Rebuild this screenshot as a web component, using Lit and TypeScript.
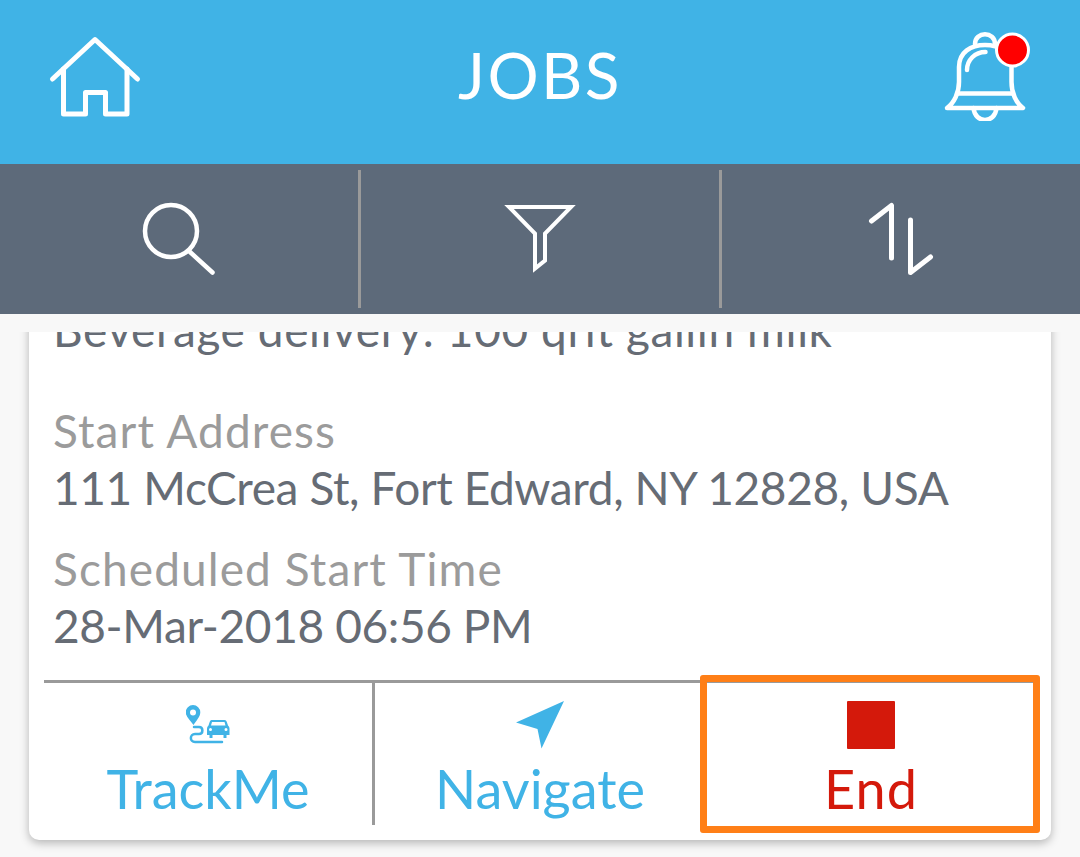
import { LitElement, html, css } from "lit";
import { customElement } from "lit/decorators.js";

@customElement("app-root")
export class AppRoot extends LitElement {
  static styles = css`
    :host { display: block; width: 1080px; height: 857px; background: #f8f8f8; overflow: hidden; font-family: Lato, "Liberation Sans", sans-serif; }
    .header { height: 164px; background: #40b3e6; display: grid; grid-template-columns: 1fr auto 1fr; align-items: center; color: #fff; }
    .title { font-size: 64px; font-weight: 400; letter-spacing: 2.4px; line-height: 164px; margin-top: -14px; }
    .hl { padding-left: 46px; display: flex; margin-top: -14px; }
    .hr { display: flex; justify-content: flex-end; padding-right: 46px; margin-top: -14px; }
    svg { display: block; }
    .toolbar { height: 150px; background: #5d6a7a; display: grid; grid-template-columns: repeat(3, 1fr); }
    .tool { display: flex; align-items: center; justify-content: center; position: relative; }
    .tool + .tool::before { content: ""; position: absolute; left: -2px; top: 6px; bottom: 6px; width: 3px; background: #9a9a9a; }
    .tool:nth-child(3)::before { left: -1px; }
    .list { height: 525px; margin-top: 18px; padding: 0 29px 17px; box-sizing: border-box; display: flex; flex-direction: column; justify-content: flex-end; overflow: hidden; }
    .card { flex: none; background: #fff; border-radius: 0 0 10px 10px; box-shadow: 0 3px 10px rgba(0, 0, 0, 0.28); }
    .fields { padding: 0 24px 26px; display: flex; flex-direction: column; gap: 24px; font-size: 46px; line-height: 57px; }
    .label { color: #9b9b9b; letter-spacing: 1.1px; }
    .value { color: #666c75; letter-spacing: -0.38px; }
    .desc { letter-spacing: 0.6px; margin-bottom: 20px; }
    .actions { margin: 0 14px 0 15px; border-top: 3px solid #9a9a9a; display: grid; grid-template-columns: 328px 3px 1fr 332px; height: 157px; }
    .sep { background: #9a9a9a; height: 142px; }
    .action { display: flex; flex-direction: column; align-items: center; font-size: 54px; color: #40b3e6; position: relative; }
    .ico { height: 76px; display: flex; justify-content: center; }
    .route { margin-top: 20px; }
    .arrow { margin-top: 18px; }
    .text { line-height: 60px; }
    .end { color: #d4190b; letter-spacing: 1px; }
    .stop { width: 48px; height: 48px; background: #d4190b; border-radius: 1px; margin-top: 18px; }
    .mark { position: absolute; left: -5px; right: -3px; top: -8px; height: 158px; box-sizing: border-box; border: 7px solid #ff7f17; border-radius: 3px; }
  `;

  render() {
    return html`
      <div class="header">
        <div class="hl">
          <svg width="100" height="90" viewBox="46 30 100 90" fill="none" stroke="#fff" stroke-width="5" stroke-linecap="round" stroke-linejoin="round">
            <path d="M52.500 79 L95 39.500 L137.500 79" />
            <path d="M63.500 69 V114 H85.500 V92.500 H105.500 V114 H127 V69" />
          </svg>
        </div>
        <div class="title">JOBS</div>
        <div class="hr">
          <svg width="90" height="92" viewBox="944 29 90 92" fill="none" stroke="#fff" stroke-width="4.500" stroke-linecap="round" stroke-linejoin="round">
            <path d="M975 44 C975 31 995 31 995 44" />
            <path d="M959 67 C959 52 971 45 985 45 C999 45 1011.500 52 1011.500 67 V82 C1011.500 93 1016 103 1023 108 H947 C954 103 959 93 959 82 Z" />
            <path d="M958 93.500 H1012" />
            <path d="M973.500 108 C975 124 995 124 996.500 108" />
            <path d="M967 70 C967 60 975 52 985.500 52" />
            <circle cx="1012.500" cy="50" r="16" fill="#ff0000" stroke-width="3" />
          </svg>
        </div>
      </div>
      <div class="toolbar">
        <div class="tool">
          <svg width="80" height="80" viewBox="140 199 80 80" fill="none" stroke="#fff" stroke-width="4.500" stroke-linecap="round">
            <circle cx="171" cy="231" r="26" />
            <path d="M190 252 L212.500 272.500" />
          </svg>
        </div>
        <div class="tool">
          <svg width="80" height="80" viewBox="500 199 80 80" fill="none" stroke="#fff" stroke-width="4">
            <path d="M509 207 H571 L545 233.500 V260.500 L535 268.500 V233.500 Z" />
          </svg>
        </div>
        <div class="tool">
          <svg width="80" height="80" viewBox="860 199 80 80" fill="none" stroke="#fff" stroke-width="5" stroke-linecap="round" stroke-linejoin="round">
            <path d="M871.500 221 L891.500 205.500 V258" />
            <path d="M910.500 220 V272.500 L930.500 257" />
          </svg>
        </div>
      </div>
      <div class="list">
        <div class="card">
          <div class="fields">
            <div class="value desc">Beverage delivery: 100 qrit gallin milk</div>
            <div>
              <div class="label">Start Address</div>
              <div class="value">111 McCrea St, Fort Edward, NY 12828, USA</div>
            </div>
            <div>
              <div class="label">Scheduled Start Time</div>
              <div class="value">28-Mar-2018 06:56 PM</div>
            </div>
          </div>
          <div class="actions">
            <div class="action">
              <div class="ico">
                <svg class="route" width="44" height="42" viewBox="186 703 44 42" fill="none">
                  <path fill-rule="evenodd" fill="#40b3e6" d="M193 705 a7.300 7.300 0 0 1 7.300 7.300 C200.300 717 196 721 193.500 725 C191 721 185.700 717 185.700 712.300 A7.300 7.300 0 0 1 193 705 Z M193 709.500 a3 3 0 1 0 0 6 a3 3 0 1 0 0 -6 Z" />
                  <path stroke="#40b3e6" stroke-width="2.500" stroke-linecap="round" d="M194 727 H199 C203.500 727 203.500 734 199 734 H195 C189.500 734 189.500 742 195 742 H222" />
                  <path fill="#40b3e6" fill-rule="evenodd" d="M211.500 720 H224.500 C226 720 226.500 721 227 722.500 L228 725.500 C229 726.500 229.500 727.500 229.500 729 V735 H226.500 V738 H223.500 V735 H212.500 V738 H209.500 V735 H207 V729 C207 727.500 207.500 726.500 208.500 725.500 L209.500 722.500 C210 721 210.500 720 211.500 720 Z M212 722 L211 725.500 H225.500 L224.500 722 Z M210.500 728 a1.500 1.500 0 1 0 0 3 a1.500 1.500 0 1 0 0 -3 Z M226 728 a1.500 1.500 0 1 0 0 3 a1.500 1.500 0 1 0 0 -3 Z" />
                </svg>
              </div>
              <div class="text">TrackMe</div>
            </div>
            <div class="sep"></div>
            <div class="action">
              <div class="ico">
                <svg class="arrow" width="48" height="48" viewBox="515 701 48 48">
                  <path fill="#40b3e6" d="M563 701 L515 722.500 L536.500 729 L540.500 748.500 Z" />
                </svg>
              </div>
              <div class="text">Navigate</div>
            </div>
            <div class="action end">
              <div class="ico"><div class="stop"></div></div>
              <div class="text">End</div>
              <div class="mark"></div>
            </div>
          </div>
        </div>
      </div>
    `;
  }
}
